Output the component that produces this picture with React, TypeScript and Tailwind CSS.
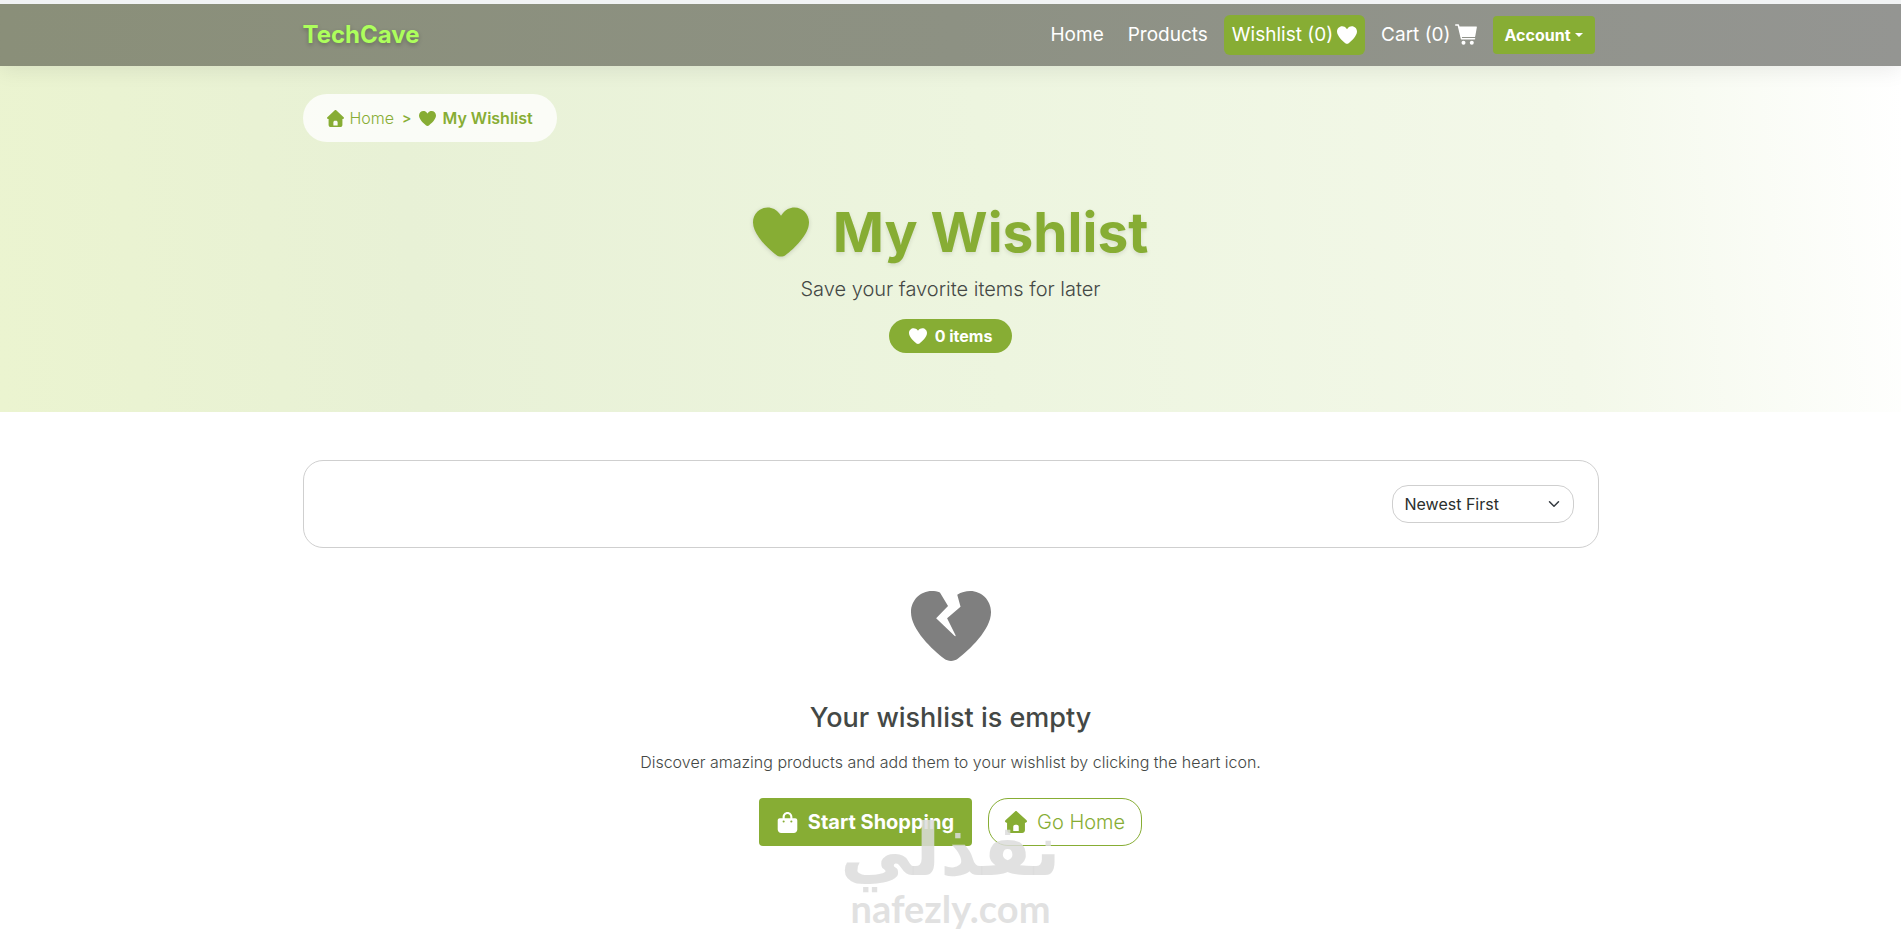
import React from 'react';

interface IconProps {
  className?: string;
}

interface NavItem {
  label: string;
  icon?: React.ReactNode;
  active?: boolean;
}

const HeartIcon: React.FC<IconProps> = ({ className }) => (
  <svg className={className} viewBox="0 0 512 512" fill="currentColor" aria-hidden="true">
    <path d="M241 87l15 21 15-21C296 52 336 32 379 32 452 32 512 92 512 165v3c0 112-140 242-213 298-12 9-27 14-43 14s-31-5-43-14C140 410 0 280 0 168v-3C0 92 60 32 133 32 176 32 216 52 241 87z" />
  </svg>
);

const BrokenHeartIcon: React.FC<IconProps> = ({ className }) => (
  <svg className={className} viewBox="0 0 512 512" fill="currentColor" aria-hidden="true">
    <path d="M133 32c18 0 36 3 52 10l52 86-76 79 117 112c4 4 9 2 7-4l-54-108 86-75-21-76c25-16 54-24 83-24 73 0 133 60 133 133v3c0 112-140 242-213 298-12 9-27 14-43 14s-31-5-43-14C140 410 0 280 0 168v-3C0 92 60 32 133 32z" />
  </svg>
);

const HouseIcon: React.FC<IconProps> = ({ className }) => (
  <svg className={className} viewBox="0 0 512 512" fill="currentColor" aria-hidden="true">
    <path d="M278 9c-12-12-31-12-44 0L10 217c-9 9-13 23-8 35s17 20 30 20h16v176c0 35 29 64 64 64h288c35 0 64-29 64-64V272h16c13 0 25-8 30-20s1-26-8-35L278 9zM240 320h32c26 0 48 21 48 48v96H192v-96c0-27 22-48 48-48z" />
  </svg>
);

const BagIcon: React.FC<IconProps> = ({ className }) => (
  <svg className={className} viewBox="0 0 448 480" fill="currentColor" aria-hidden="true">
    <path d="M160 112c0-35 29-64 64-64s64 29 64 64v32H160v-32zm-48 32H48c-26 0-48 22-48 48v208c0 44 36 80 80 80h288c44 0 80-36 80-80V192c0-26-22-48-48-48h-64v-32C336 50 286 0 224 0S112 50 112 112v32zm24 48a24 24 0 1 1 0 48 24 24 0 1 1 0-48zm152 24a24 24 0 1 1 48 0 24 24 0 1 1-48 0z" />
  </svg>
);

const CartIcon: React.FC<IconProps> = ({ className }) => (
  <svg className={className} viewBox="0 0 22 22" fill="currentColor" aria-hidden="true">
    <path d="M.7 1h2.600l3.200 13.700h13" fill="none" stroke="currentColor" strokeWidth={1.5} strokeLinecap="round" strokeLinejoin="round" />
    <path d="M3.500 2.400h17.800c.4 0 .7.300.6.700l-1.700 9.400c-.1.400-.4.600-.8.600H6z" />
    <circle cx="8.500" cy="18.800" r="2" />
    <circle cx="16.800" cy="18.800" r="2" />
  </svg>
);

const navItems: NavItem[] = [
  { label: 'Home' },
  { label: 'Products' },
  { label: 'Wishlist (0)', icon: <HeartIcon className="size-5" />, active: true },
  { label: 'Cart (0)', icon: <CartIcon className="size-[22px]" /> },
];

const Header: React.FC = () => (
  <header className="relative border-t-4 border-[#f1f3f4] bg-linear-to-r from-[#8a8f79] via-[#8d9183] to-[#949592] shadow-[0_4px_20px_rgba(0,0,0,0.08)]">
    <div className="mx-auto flex h-[62px] max-w-[1296px] items-center justify-between">
      <a href="#" className="text-2xl font-bold text-[#adff5c] [text-shadow:0_2px_4px_rgba(0,0,0,0.25)]">
        TechCave
      </a>
      <nav className="mr-1 flex items-center gap-2">
        {navItems.map((item) => (
          <a
            key={item.label}
            href="#"
            className={`flex h-10 items-center gap-1 rounded-md px-2 text-[19px] text-white ${item.active ? 'bg-[#87ad34]' : ''}`}
          >
            {item.label}
            {item.icon}
          </a>
        ))}
        <button type="button" className="flex h-[38px] items-center gap-1 rounded-sm bg-[#87ad34] px-3 text-base font-bold text-white">
          Account
          <span className="border-x-4 border-t-4 border-x-transparent border-t-white" />
        </button>
      </nav>
    </div>
  </header>
);

const Hero: React.FC = () => (
  <section className="bg-[linear-gradient(85deg,#ebf4d0_0%,#e8f1d6_22%,#edf5df_52%,#f3f8e9_82%,#ffffff_100%)] pt-7 pb-[59px]">
    <div className="mx-auto max-w-[1296px]">
      <nav aria-label="Breadcrumb" className="flex h-12 w-fit items-center gap-2 rounded-full bg-white/80 px-6 text-[#87ad34]">
        <a href="#" className="flex items-center gap-1.5 font-light">
          <HouseIcon className="size-[17px]" />
          Home
        </a>
        <span className="text-sm font-semibold">&gt;</span>
        <span className="flex items-center gap-1.5 font-semibold">
          <HeartIcon className="size-[17px]" />
          My Wishlist
        </span>
      </nav>

      <div className="mt-14 flex flex-col items-center">
        <h1 className="flex items-center gap-6 text-[55px] leading-[68px] font-bold text-[#87ad34] [text-shadow:0_2px_4px_rgba(0,0,0,0.1)]">
          <HeartIcon className="size-14 drop-shadow-sm" />
          My Wishlist
        </h1>
        <p className="mt-2 text-xl leading-[30px] font-light text-[#444845]">Save your favorite items for later</p>
        <span className="mt-[15px] flex h-[34px] items-center gap-2 rounded-full bg-[#87ad34] px-5 font-bold text-white">
          <HeartIcon className="size-[18px]" />
          0 items
        </span>
      </div>
    </div>
  </section>
);

const SortBar: React.FC = () => (
  <div className="flex justify-end rounded-[20px] border border-[#cfcfcf] p-6">
    <div className="relative">
      <select
        aria-label="Sort wishlist"
        className="h-[38px] w-[182px] appearance-none rounded-2xl border border-[#cfcfcf] bg-white px-3 text-base text-[#2b2f2d]"
      >
        <option>Newest First</option>
      </select>
      <svg className="pointer-events-none absolute top-[13px] right-3.5 size-3" viewBox="0 0 16 16" fill="none" stroke="#343a40" strokeWidth={2}>
        <path strokeLinecap="round" strokeLinejoin="round" d="m2 5 6 6 6-6" />
      </svg>
    </div>
  </div>
);

const EmptyState: React.FC = () => (
  <div className="flex flex-col items-center pt-[38px] text-[#444845]">
    <BrokenHeartIcon className="size-20 text-[#7f7f7f]" />
    <h2 className="mt-[34px] text-[27px] leading-9 font-medium">Your wishlist is empty</h2>
    <p className="mt-3.5 text-base leading-6 font-light">
      Discover amazing products and add them to your wishlist by clicking the heart icon.
    </p>
    <div className="mt-6 flex gap-4 text-xl">
      <a href="#" className="flex h-12 items-center gap-2.5 rounded-sm bg-[#87ad34] px-[18px] font-bold text-white">
        <BagIcon className="size-[21px]" />
        Start Shopping
      </a>
      <a href="#" className="flex h-12 items-center gap-2.5 rounded-[20px] border border-[#87ad34] px-4 font-light text-[#87ad34]">
        <HouseIcon className="size-[22px]" />
        Go Home
      </a>
    </div>
  </div>
);

const Watermark: React.FC = () => (
  <div className="pointer-events-none absolute inset-x-0 bottom-0.5 flex flex-col items-center text-[#dcdcdc]/85">
    <span lang="ar" dir="rtl" className="font-['DejaVu_Sans',sans-serif] text-7xl leading-[76px] font-bold">نفذلي</span>
    <span className="font-['Lato',sans-serif] text-[38px] leading-10 font-bold">nafezly.com</span>
  </div>
);

const App: React.FC = () => (
  <div className="relative min-h-screen overflow-hidden bg-white font-['Inter',sans-serif]">
    <Header />
    <Hero />
    <main className="mx-auto max-w-[1296px] pt-12">
      <SortBar />
      <EmptyState />
    </main>
    <Watermark />
  </div>
);

export default App;
